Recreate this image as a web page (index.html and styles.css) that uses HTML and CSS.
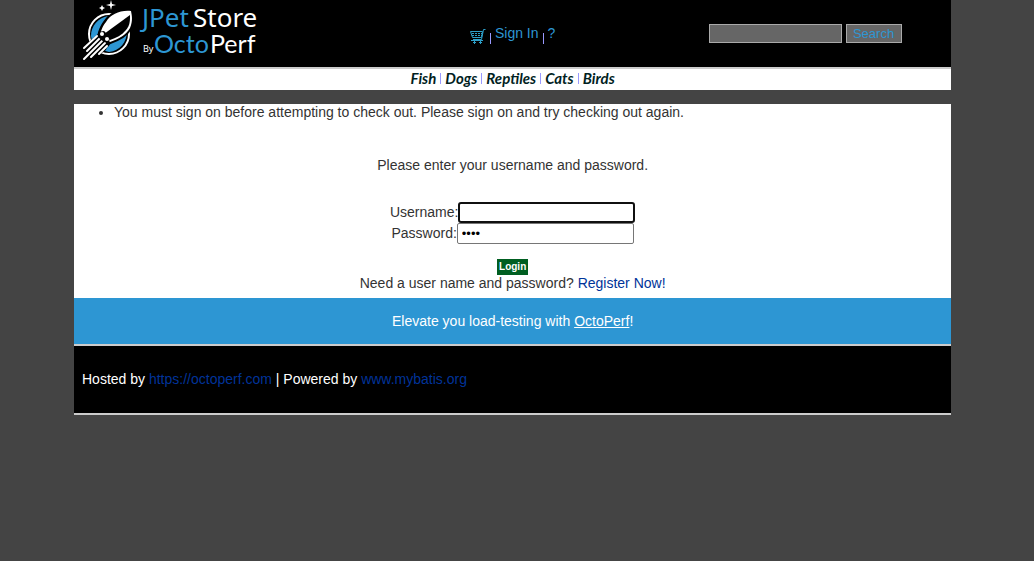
FILE: index.html
```html
<!DOCTYPE html>
<html lang="en">
<head>
<meta charset="utf-8">
<title>JPetStore Demo</title>
<link rel="stylesheet" href="styles.css">
</head>
<body>
<header class="header">
  <a class="logo" href="#" aria-label="JPetStore by OctoPerf">
    <svg width="190" height="62" viewBox="0 0 190 62" aria-hidden="true">
      <!-- globe behind the rocket -->
      <circle cx="27" cy="34" r="20" fill="#000" stroke="#fff" stroke-width="2"/>
      <path d="M26 16C16 18 9 26 9 36L10 41L15 38C16 29 20 22 26 16Z" fill="#2d96d3"/>
      <path d="M45 31C45 42 38 51 27 52L20 50L26 47L29 43L38 39Z" fill="#2d96d3"/>
      <!-- hull -->
      <path d="M49 11C38 10 29 14 24 22C20 27 19 31 18 35L28 42C37 39 44 35 48 28C51 21 50 16 49 11Z" fill="#fff" stroke="#000" stroke-width="4"/>
      <path d="M49 11C38 10 29 14 24 22C20 27 19 31 18 35L28 42C37 39 44 35 48 28C51 21 50 16 49 11Z" fill="#fff"/>
      <path d="M48 15C48 21 48 25 44 30C40 35 34 38 28 40L22 34Z" fill="#000"/>
      <!-- exhaust and engines -->
      <path d="M0 60L0 48L16 34L27 41L24 50L10 60Z" fill="#000"/>
      <path d="M15 36L2 48M18 38L5 51M20 41L2 59M23 43L9 57M25 46L17 54" fill="none" stroke="#fff" stroke-width="2" stroke-linecap="round"/>
      <path d="M16 32L22 31L28 37L27 43L22 42L16 37Z" fill="#000"/>
      <circle cx="20" cy="34" r="2" fill="#fff"/>
      <circle cx="25" cy="39" r="2" fill="#fff"/>
      <!-- stars -->
      <path d="M29 0L30 4L34 5L30 6L29 10L28 6L24 5L28 4ZM20 5L21 7L23 8L21 9L20 11L19 9L17 8L19 7Z" fill="#fff"/>
      <text class="logo-main logo-blue" x="60" y="27" font-size="26">JPet</text>
      <text class="logo-main" x="111" y="27" font-size="26">Store</text>
      <text class="logo-main" x="61" y="52" font-size="9">By</text>
      <text class="logo-sub logo-blue" x="72" y="53" font-size="25">Octo</text>
      <text class="logo-sub" x="128" y="53" font-size="25">Perf</text>
    </svg>
  </a>
  <nav class="menu" aria-label="Account">
    <a class="cart" href="#" aria-label="Cart">
      <svg width="16" height="16" viewBox="0 0 16 16" aria-hidden="true" fill="none" stroke="#2d9fc8">
        <path d="M15.500 1.500H13.500L11.500 11.500H3M0.500 3.500H12.500L11.500 9.500H2.500Z"/>
        <path d="M2 5.500H12M2 7.500H12" stroke-dasharray="2 1"/>
        <path d="M1 12.500H13M3 14.500H6M9 14.500H12M4.500 12V16M10.500 12V16"/>
      </svg>
    </a>
    <span class="bar"></span>
    <a href="#">Sign In</a>
    <span class="bar"></span>
    <a href="#">?</a>
  </nav>
  <form class="search">
    <input class="search-box" type="text" aria-label="Search products">
    <button class="search-button" type="button">Search</button>
  </form>
</header>
<nav class="categories" aria-label="Categories">
  <a href="#">Fish</a><a href="#">Dogs</a><a href="#">Reptiles</a><a href="#">Cats</a><a href="#">Birds</a>
</nav>
<main class="content">
  <ul class="messages">
    <li>You must sign on before attempting to check out. Please sign on and try checking out again.</li>
  </ul>
  <form class="signin">
    <p class="intro">Please enter your username and password.</p>
    <div class="field"><label for="username">Username:</label><input class="focused" id="username" type="text" autofocus></div>
    <div class="field"><label for="password">Password:</label><input id="password" type="password" value="j2ee"></div>
    <button class="login" type="button">Login</button>
  </form>
  <p class="register">Need a user name and password? <a href="#">Register Now!</a></p>
</main>
<footer>
  <div class="banner">Elevate you load-testing with <a href="#">OctoPerf</a>!</div>
  <div class="powered">Hosted by <a href="#">https://octoperf.com</a> | Powered by <a href="#">www.mybatis.org</a></div>
</footer>
</body>
</html>
```
FILE: styles.css
```css
* { box-sizing: border-box; }

body {
  margin: 0 8% 0 74px;
  background: #444;
  color: #333;
  font: 14px/16px "Liberation Sans", Arial, sans-serif;
}

a { color: #039; text-decoration: none; }
p { margin: 0; }

.header {
  display: grid;
  grid-template-columns: repeat(3, 1fr);
  background: #000;
  border-bottom: 2px solid #ccc;
  height: 69px;
}

.logo { padding-left: 8px; }
.logo svg { display: block; }
.logo text { fill: #fff; }
.logo .logo-blue { fill: #2d96d3; }
.logo-main { font-family: "Noto Sans", sans-serif; }
.logo-sub { font-family: Lato, sans-serif; }

.menu {
  display: flex;
  justify-content: center;
  gap: 4px;
  padding-top: 25px;
}
.menu a { color: #2d96d3; }
.cart { padding-top: 3px; }
.cart svg { display: block; }
.bar {
  width: 1px;
  height: 11px;
  margin-top: 8px;
  background: #99f;
}

.search {
  display: flex;
  justify-content: center;
  align-items: flex-start;
  gap: 4px;
  padding-top: 24px;
}
.search-box, .search-button {
  height: 19px;
  border: 1px solid #aaa;
  background: #666;
  color: #2d96d3;
  font: 13px/15px "Liberation Sans", Arial, sans-serif;
}
.search-box { width: 133px; }
.search-button { width: 56px; padding: 0; }

.categories {
  display: flex;
  justify-content: center;
  height: 21px;
  background: #fff;
  font: italic bold 15px/18px Lato, sans-serif;
}
.categories a { color: #021f1f; display: flex; }
.categories a + a::before {
  content: "";
  width: 1px;
  height: 11px;
  margin: 4px 4px 0;
  background: #99f;
}

.content {
  margin-top: 14px;
  padding-bottom: 7px;
  background: #fff;
}
.messages { margin: 0; padding-left: 40px; }

.signin {
  display: flex;
  flex-direction: column;
  align-items: center;
  padding-top: 37px;
}
.intro { margin-bottom: 29px; }
.field { display: flex; line-height: 21px; }
.field input {
  width: 177px;
  height: 21px;
  padding: 1px 4px;
  border: 1px solid #767676;
  border-radius: 2px;
  outline: none;
  color: #000;
  font: 13px "Liberation Sans", Arial, sans-serif;
}
.field .focused { border: 2px solid #101010; border-radius: 3px; padding: 0 3px; }

.login {
  height: 16px;
  margin-top: 15px;
  padding: 0 2px;
  border: 0;
  background: #005e21;
  color: #fff;
  font: bold 10px/16px "Liberation Sans", Arial, sans-serif;
}
.register { text-align: center; }

.banner {
  padding: 15px 0;
  border-bottom: 2px solid #ccc;
  background: #2d96d3;
  color: #fff;
  text-align: center;
}
.banner a { color: #fff; text-decoration: underline; }

.powered {
  padding: 25px 8px 26px;
  border-bottom: 2px solid #ccc;
  background: #000;
  color: #fff;
}
```
